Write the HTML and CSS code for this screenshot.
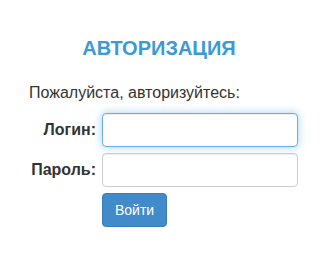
FILE: index.html
```html
<!DOCTYPE html>
<html lang="ru">
<head>
<meta charset="utf-8">
<link rel="stylesheet" href="styles.css">
</head>
<body>
<div class="box">
  <h1 class="title">АВТОРИЗАЦИЯ</h1>
  <p class="hint">Пожалуйста, авторизуйтесь:</p>
  <form class="form">
    <div class="row">
      <label class="label" for="login">Логин:</label>
      <input class="input focus" id="login" type="text">
    </div>
    <div class="row">
      <label class="label" for="pass">Пароль:</label>
      <input class="input" id="pass" type="password">
    </div>
    <div class="row">
      <span class="label"></span>
      <button class="btn" type="button">Войти</button>
    </div>
  </form>
</div>
</body>
</html>
```
FILE: styles.css
```css
html, body {
  margin: 0;
  padding: 0;
  background: #fff;
}
body {
  font-family: "Liberation Sans", Arial, sans-serif;
  color: #333;
  font-size: 14px;
}
.box {
  width: 318px;
  padding-top: 37px;
}
.title {
  margin: 0;
  text-align: center;
  font-size: 20px;
  font-weight: bold;
  color: #3a9ad6;
  line-height: 22px;
}
.hint {
  margin: 24px 0 0 29px;
  font-size: 16px;
  line-height: 20px;
}
.form {
  margin-top: 10px;
}
.row {
  display: flex;
  align-items: center;
  gap: 6px;
  margin-bottom: 6px;
}
.label {
  width: 96px;
  text-align: right;
  font-weight: bold;
  font-size: 16px;
}
.input {
  box-sizing: border-box;
  width: 196px;
  height: 34px;
  border: 1px solid #ccc;
  border-radius: 4px;
  padding: 6px 12px;
  margin: 0;
  box-shadow: inset 0 1px 1px rgba(0,0,0,.075);
  outline: none;
}
.input.focus {
  border-color: #66afe9;
  box-shadow: inset 0 1px 1px rgba(0,0,0,.075), 0 0 8px rgba(102,175,233,.6);
}
.btn {
  box-sizing: border-box;
  height: 34px;
  padding: 6px 12px;
  border: 1px solid #357ebd;
  border-radius: 4px;
  background: #428bca;
  color: #fff;
  font-family: "Liberation Sans", Arial, sans-serif;
  font-size: 14px;
}
```
